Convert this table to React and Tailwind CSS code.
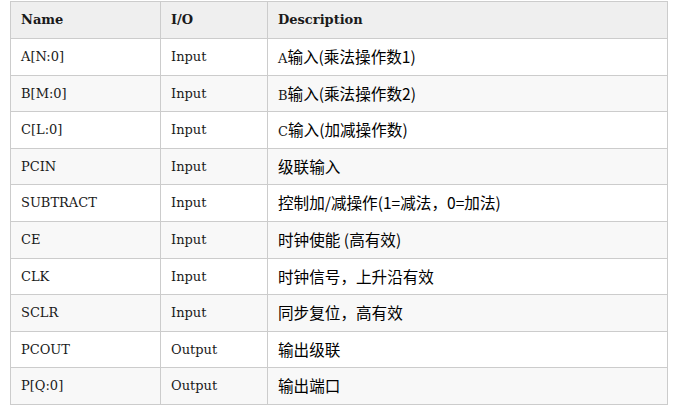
import React from "react";

const rows = [
  ["A[N:0]", "Input", "A", "输入(乘法操作数1)"],
  ["B[M:0]", "Input", "B", "输入(乘法操作数2)"],
  ["C[L:0]", "Input", "C", "输入(加减操作数)"],
  ["PCIN", "Input", "", "级联输入"],
  ["SUBTRACT", "Input", "", "控制加/减操作(1=减法，0=加法)"],
  ["CE", "Input", "", "时钟使能 (高有效)"],
  ["CLK", "Input", "", "时钟信号，上升沿有效"],
  ["SCLR", "Input", "", "同步复位，高有效"],
  ["PCOUT", "Output", "", "输出级联"],
  ["P[Q:0]", "Output", "", "输出端口"],
];

const serif = "font-['DejaVu_Serif','Noto_Sans_CJK_SC',serif]";

export default function App() {
  return (
    <div className="w-[681px] h-[412px] bg-white pl-[10px] pt-[1px]">
      <table className="w-[657px] border-collapse table-fixed text-[13px] text-[#1a1a1a]">
        <colgroup>
          <col className="w-[150px]" />
          <col className="w-[107px]" />
          <col className="w-[400px]" />
        </colgroup>
        <thead>
          <tr className="h-[37px] bg-[#efefef]">
            <th className={`border border-[#cccccc] px-[10px] text-left font-bold ${serif}`}>Name</th>
            <th className={`border border-[#cccccc] px-[10px] text-left font-bold ${serif}`}>I/O</th>
            <th className={`border border-[#cccccc] px-[10px] text-left font-bold ${serif}`}>Description</th>
          </tr>
        </thead>
        <tbody>
          {rows.map((r, i) => (
            <tr key={i} className={`h-[36.6px] ${i % 2 === 1 ? "bg-[#f8f8f8]" : "bg-white"}`}>
              <td className={`border border-[#cccccc] px-[10px] ${serif}`}>{r[0]}</td>
              <td className={`border border-[#cccccc] px-[10px] ${serif}`}>{r[1]}</td>
              <td className="border border-[#cccccc] px-[10px] whitespace-nowrap">
                {r[2] && <span className={serif}>{r[2]}</span>}
                <span className="font-['Noto_Sans_CJK_SC',sans-serif] text-[15.6px] text-black">{r[3]}</span>
              </td>
            </tr>
          ))}
        </tbody>
      </table>
    </div>
  );
}
